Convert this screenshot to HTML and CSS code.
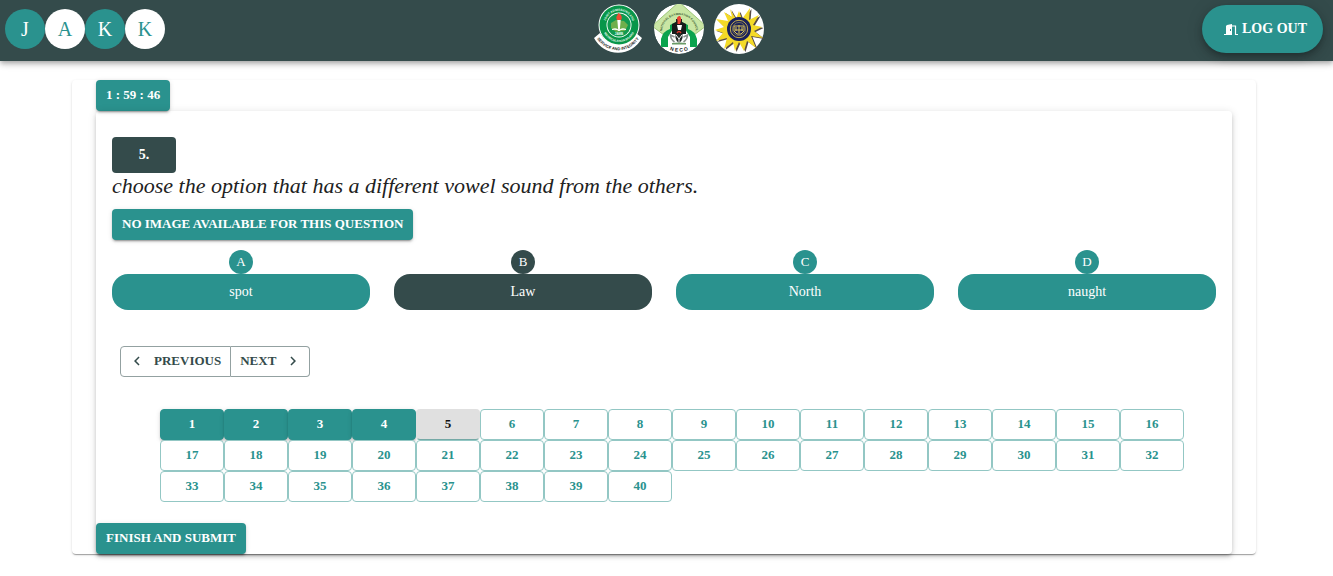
FILE: index.html
```html
<!DOCTYPE html>
<html lang="en">
<head>
<meta charset="utf-8">
<meta name="viewport" content="width=device-width, initial-scale=1">
<title>Practice exam</title>
<link rel="stylesheet" href="styles.css">
</head>
<body>
<header class="topbar">
  <div class="avatars">
    <span class="avatar">J</span><span class="avatar avatar-light">A</span><span class="avatar">K</span><span class="avatar avatar-light">K</span>
  </div>
  <div class="logos">
    <svg class="logo" viewBox="0 0 50 50" role="img" aria-label="JAMB">
      <defs>
        <path id="jamb-top" d="M12 26A14 14 0 1 1 38 26"/>
        <path id="jamb-mid" d="M8 21A17 17 0 0 0 42 21"/>
        <path id="jamb-ribbon" d="M2 33A25 25 0 0 0 46 33"/>
      </defs>
      <path d="M0 34L6 29A20 20 0 0 0 42 29L48 34A27 27 0 0 1 0 34Z" fill="#fff"/>
      <circle cx="25" cy="21" r="20.5" fill="#fff"/>
      <circle cx="25" cy="21" r="19.5" fill="#08964a"/>
      <circle cx="25" cy="21" r="12.500" fill="#fff"/>
      <circle cx="25" cy="21" r="11.600" fill="#119a50"/>
      <path d="M17 19l5-3 8 1 4 4-3 6-9 1-5-4z" fill="#6faf4c"/>
      <path d="M23.300 16h3.400l-1 11h-1.400z" fill="#fff"/>
      <path d="M23 16c-2-4 1-4 1-7 3 1 5 4 3 7z" fill="#f04a32"/>
      <path d="M18 25q4-2 7 1 3-3 7-1v1q-4-1-7 1-3-2-7-1z" fill="#fff"/>
      <text class="seal-text seal-white"><textPath href="#jamb-top" startOffset="50%" text-anchor="middle">JOINT ADMISSIONS AND</textPath></text>
      <text class="seal-text seal-white"><textPath href="#jamb-mid" startOffset="50%" text-anchor="middle">MATRICULATION BOARD</textPath></text>
      <text class="seal-text seal-white" x="25" y="31" text-anchor="middle">JAMB</text>
      <text class="seal-text seal-ribbon"><textPath href="#jamb-ribbon" startOffset="50%" text-anchor="middle">SERVICE AND INTEGRITY</textPath></text>
    </svg>
    <svg class="logo" viewBox="0 0 50 50" role="img" aria-label="NECO">
      <defs>
        <clipPath id="neco-clip"><circle cx="25" cy="25" r="25"/></clipPath>
        <path id="neco-top" d="M8 28A17 17 0 0 1 42 28"/>
        <path id="neco-bottom" d="M5 37A24 24 0 0 0 45 37"/>
      </defs>
      <g clip-path="url(#neco-clip)">
        <circle cx="25" cy="25" r="25" fill="#fff"/>
        <path d="M25-2L52 22 40 31H10L-2 22Z" fill="#c9e6a4" stroke="#9cc578"/>
        <path d="M7 43V35Q9 27 16 25V21L22 18H28L34 21V25Q41 27 43 35V43Z" fill="#0aa34e"/>
        <path d="M14 43V33L19 25H31L36 33V43Z" fill="#fff"/>
        <path d="M18 30V20L22 18V15H28V18L32 20V30Z" fill="#171c1b"/>
        <path d="M23.500 20V16C22 14 24 12 26 12 28 15 27 17 26 20Z" fill="#eb4032"/>
        <path d="M23 21h5l-1 5h-3z" fill="#fff"/>
        <path d="M21.500 30h7v4q-.5 3-3.500 5-3-2-3.500-5z" fill="#232b29"/>
        <path d="M22 31l3 4 3-4M25 35v4" fill="none" stroke="#fff"/>
        <path d="M20.500 38q-4-3-4-7l4 2M29.500 38q4-3 4-7l-4 2" fill="none" stroke="#8a918d" stroke-width="1.600"/>
        <path d="M23 29q2-3 4 0" fill="none" stroke="#d7382e" stroke-width="1.500"/>
        <path d="M18 39q7-1 14 0v1.500H18z" fill="#6a9b67"/>
        <text class="seal-text seal-green"><textPath href="#neco-top" startOffset="50%" text-anchor="middle">NATIONAL EXAMINATION COUNCIL</textPath></text>
        <text class="seal-text seal-neco"><textPath href="#neco-bottom" startOffset="50%" text-anchor="middle">N E C O</textPath></text>
      </g>
    </svg>
    <svg class="logo" viewBox="0 0 50 50" role="img" aria-label="WAEC">
      <circle cx="25" cy="25" r="25" fill="#fff"/>
      <path transform="translate(1.500 1)" d="M16 5l6 10 3-8 3 8 8-11-1 12 10-5-6 10 9 2-8 4 9 7-12-2 5 12-9-7-3 10-5-9-4 9-2-9-9 7 3-11-11 3 7-8-8-3 9-3-8-8 12 2-4-9 8 5z" fill="#594b45"/>
      <path d="M16 5l6 10 3-8 3 8 8-11-1 12 10-5-6 10 9 2-8 4 9 7-12-2 5 12-9-7-3 10-5-9-4 9-2-9-9 7 3-11-11 3 7-8-8-3 9-3-8-8 12 2-4-9 8 5z" fill="#f4da27"/>
      <circle cx="25" cy="25" r="12" fill="#19215b"/>
      <circle cx="25" cy="25" r="8.700" fill="none" stroke="#c3ac50"/>
      <circle cx="25" cy="25" r="6.500" fill="none" stroke="#8c8150" stroke-width=".8"/>
      <path d="M20 22h10v5l-3 3h-4l-3-3zM22 23v4M25 21v8M28 23v4M21 26h8" fill="none" stroke="#dbc45b" stroke-width="1"/>
    </svg>
  </div>
  <button class="logout" type="button">
    <svg class="door" viewBox="0 0 16 16" aria-hidden="true"><path fill-rule="evenodd" d="M1 13h2V5l1-1 5-1v11H1zM7 8v2h1V8z" fill="currentColor"/><path d="M9 5h3.500v8.500H15" fill="none" stroke="currentColor" stroke-width="1.200"/></svg>
    LOG OUT
  </button>
</header>
<main class="sheet">
  <div class="btn timer" role="timer">1 : 59 : 46</div>
  <section class="card">
    <div class="number">5.</div>
    <h1 class="question">choose the option that has a different vowel sound from the others.</h1>
    <button class="btn" type="button">NO IMAGE AVAILABLE FOR THIS QUESTION</button>
    <div class="options">
      <div class="option"><span class="letter">A</span><button class="answer" type="button">spot</button></div>
      <div class="option chosen"><span class="letter">B</span><button class="answer" type="button">Law</button></div>
      <div class="option"><span class="letter">C</span><button class="answer" type="button">North</button></div>
      <div class="option"><span class="letter">D</span><button class="answer" type="button">naught</button></div>
    </div>
    <div class="pager">
      <button class="step" type="button"><svg class="chevron" viewBox="0 0 24 24" aria-hidden="true"><path d="M15.410 7.410L14 6l-6 6 6 6 1.410-1.410L10.830 12z" fill="currentColor"/></svg>PREVIOUS</button>
      <button class="step" type="button">NEXT<svg class="chevron" viewBox="0 0 24 24" aria-hidden="true"><path d="M10 6L8.590 7.410 13.170 12l-4.580 4.590L10 18l6-6z" fill="currentColor"/></svg></button>
    </div>
    <nav class="jump" aria-label="Questions">
      <button class="cell done" type="button">1</button><button class="cell done" type="button">2</button><button class="cell done" type="button">3</button><button class="cell done" type="button">4</button><button class="cell current" type="button">5</button><button class="cell" type="button">6</button><button class="cell" type="button">7</button><button class="cell" type="button">8</button><button class="cell" type="button">9</button><button class="cell" type="button">10</button><button class="cell" type="button">11</button><button class="cell" type="button">12</button><button class="cell" type="button">13</button><button class="cell" type="button">14</button><button class="cell" type="button">15</button><button class="cell" type="button">16</button>
      <button class="cell" type="button">17</button><button class="cell" type="button">18</button><button class="cell" type="button">19</button><button class="cell" type="button">20</button><button class="cell" type="button">21</button><button class="cell" type="button">22</button><button class="cell" type="button">23</button><button class="cell" type="button">24</button><button class="cell" type="button">25</button><button class="cell" type="button">26</button><button class="cell" type="button">27</button><button class="cell" type="button">28</button><button class="cell" type="button">29</button><button class="cell" type="button">30</button><button class="cell" type="button">31</button><button class="cell" type="button">32</button>
      <button class="cell" type="button">33</button><button class="cell" type="button">34</button><button class="cell" type="button">35</button><button class="cell" type="button">36</button><button class="cell" type="button">37</button><button class="cell" type="button">38</button><button class="cell" type="button">39</button><button class="cell" type="button">40</button>
    </nav>
    <button class="btn finish" type="button">FINISH AND SUBMIT</button>
  </section>
</main>
</body>
</html>
```

FILE: styles.css
```css
:root {
  --teal: #2a928e;
  --slate: #344b4b;
  --raised: 0 3px 1px -2px rgba(0, 0, 0, .2), 0 2px 2px rgba(0, 0, 0, .14), 0 1px 5px rgba(0, 0, 0, .12);
}

* { box-sizing: border-box; }

body {
  margin: 0;
  background: #fff;
  color: #212121;
  font-family: "Liberation Serif", "Times New Roman", serif;
}

button { font-family: inherit; cursor: pointer; }

.topbar {
  display: flex;
  align-items: center;
  justify-content: space-between;
  padding: 4px 10px 7px 5px;
  background: var(--slate);
  box-shadow: 0 2px 4px -1px rgba(0, 0, 0, .2), 0 4px 5px rgba(0, 0, 0, .14), 0 1px 10px rgba(0, 0, 0, .12);
}

.avatars { display: flex; }

.avatar {
  display: flex;
  align-items: center;
  justify-content: center;
  width: 40px;
  height: 40px;
  border-radius: 50%;
  background: var(--teal);
  color: #fff;
  font-size: 20px;
}

.avatar-light { background: #fff; color: var(--teal); }

.logos { display: flex; gap: 10px; margin-right: 10px; }
.logo { display: block; width: 50px; height: 50px; }

.seal-text { font-family: "Liberation Sans", Arial, sans-serif; font-weight: 700; font-size: 3px; }
.seal-white { fill: #e9fff2; }
.seal-ribbon { fill: #222; font-size: 4px; }
.seal-green { fill: #3d5e32; }
.seal-neco { fill: #222; font-size: 5px; }

.logout {
  display: flex;
  align-items: center;
  gap: 3px;
  height: 48px;
  padding: 0 16px 0 21px;
  border: 0;
  border-radius: 24px;
  background: var(--teal);
  color: #fff;
  font-size: 14px;
  font-weight: 700;
  box-shadow: 0 3px 5px -1px rgba(0, 0, 0, .2), 0 6px 10px rgba(0, 0, 0, .14), 0 1px 18px rgba(0, 0, 0, .12);
}

.door { width: 16px; height: 16px; }

.sheet {
  margin: 19px 77px 20px 72px;
  padding: 0 24px;
  border-radius: 4px;
  box-shadow: 0 2px 1px -1px rgba(0, 0, 0, .2), 0 1px 1px rgba(0, 0, 0, .14), 0 1px 3px rgba(0, 0, 0, .12);
}

.btn {
  display: block;
  width: max-content;
  padding: 3px 10px 5px;
  border: 0;
  border-radius: 4px;
  background: var(--teal);
  color: #fff;
  font-size: 13px;
  font-weight: 700;
  line-height: 23px;
  box-shadow: var(--raised);
}

.card {
  padding: 26px 16px 0;
  border-radius: 4px;
  box-shadow: 0 3px 3px -2px rgba(0, 0, 0, .2), 0 3px 4px rgba(0, 0, 0, .14), 0 1px 8px rgba(0, 0, 0, .12);
}

.number {
  width: 64px;
  border-radius: 4px;
  background: var(--slate);
  color: #fff;
  font-size: 14px;
  font-weight: 700;
  line-height: 36px;
  text-align: center;
}

.question {
  margin: 0 0 10px;
  font-size: 22px;
  font-style: italic;
  font-weight: 400;
  line-height: 26px;
}

.options {
  display: grid;
  grid-template-columns: repeat(4, 1fr);
  gap: 24px;
  margin-top: 10px;
}

.option { display: flex; flex-direction: column; align-items: center; }

.letter {
  width: 24px;
  border-radius: 50%;
  background: var(--teal);
  color: #fff;
  font-size: 13px;
  line-height: 24px;
  text-align: center;
}

.answer {
  width: 100%;
  height: 36px;
  border: 0;
  border-radius: 16px;
  background: var(--teal);
  color: #fff;
  font-size: 14px;
}

.chosen .letter, .chosen .answer { background: var(--slate); }

.pager { display: flex; margin: 36px 8px 32px; }

.step {
  display: flex;
  align-items: center;
  gap: 8px;
  padding: 2px 8px 4px 7px;
  border: 1px solid #93a1a1;
  border-radius: 4px;
  background: #fff;
  color: var(--slate);
  font-size: 13px;
  font-weight: 700;
  line-height: 23px;
}

.step:first-child { padding-right: 9px; border-radius: 4px 0 0 4px; }
.step:last-child { padding: 2px 7px 4px 9px; border-left: 0; border-radius: 0 4px 4px 0; }
.chevron { width: 18px; height: 18px; }

.jump {
  display: grid;
  grid-template-columns: repeat(16, 1fr);
  margin: 0 32px 21px 48px;
}

.cell {
  padding: 2px 0 4px;
  border: 1px solid #93c7c4;
  border-radius: 4px;
  background: #fff;
  color: var(--teal);
  font-size: 13px;
  font-weight: 700;
  line-height: 23px;
}

.done { border-color: var(--teal); background: var(--teal); color: #fff; box-shadow: var(--raised); }
.current { border-color: #e0e0e0 #e0e0e0 #75a9a6; background: #e0e0e0; color: #111; }
.finish { margin-left: -16px; }
```
